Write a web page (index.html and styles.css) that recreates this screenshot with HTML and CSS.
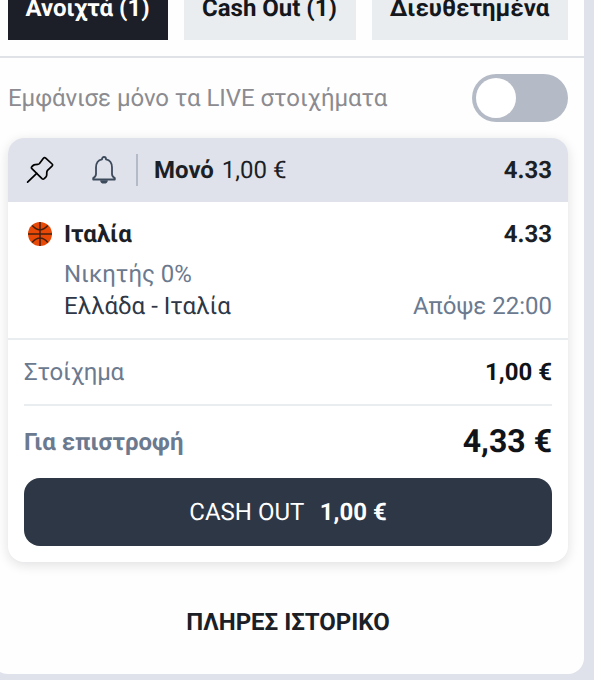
FILE: index.html
```html
<!DOCTYPE html>
<html lang="el">
<head>
  <meta charset="UTF-8">
  <meta name="viewport" content="width=device-width, initial-scale=1.0">
  <title>Στοιχήματα</title>
  <link rel="stylesheet" href="styles.css">
</head>
<body>
  <main class="panel">
    <nav class="tabs">
      <button class="tab tab-open active">Ανοιχτά (1)</button>
      <button class="tab tab-cashout">Cash Out (1)</button>
      <button class="tab tab-settled">Διευθετημένα</button>
    </nav>

    <div class="live-filter">
      <span class="live-label">Εμφάνισε μόνο τα LIVE στοιχήματα</span>
      <span class="toggle"></span>
    </div>

    <section class="bet-card">
      <header class="bet-header">
        <svg class="icon pin" viewBox="0 0 28 28" fill="none" stroke="#000" stroke-width="1.7" stroke-linecap="round" stroke-linejoin="round">
          <path d="M1.6 26.2L10.7 17.4"/>
          <path d="M17.4 2.2Q18.5 1 19.7 2.1L26.1 8Q27.2 9.1 26 10.1L21.5 14.4Q20.8 15.2 20.8 16.4L20.7 19.2Q20.6 20.3 19.8 21.1L18.2 22.7Q17.1 23.7 16 22.7L5.9 12.7Q4.9 11.6 6 10.5L7.1 9.5Q8 8.7 9.3 8.6L11.7 8.4Q12.8 8.3 13.5 7.5Z"/>
        </svg>
        <svg class="icon bell" viewBox="0 0 28 28" fill="none" stroke="#3c4a5c" stroke-width="1.8" stroke-linejoin="round">
          <path d="M12 3.4V3A2 2 0 0 1 16 3V3.4C20.3 4.3 22 7.6 22 11.5V18C22 20 23.2 21.2 24.8 22V23.5H3.2V22C4.8 21.2 6 20 6 18V11.5C6 7.6 7.7 4.3 12 3.4Z"/>
          <path d="M10.2 24.2H17.8A3.8 3.4 0 0 1 10.2 24.2Z" fill="#3c4a5c" stroke="none"/>
        </svg>
        <span class="separator"></span>
        <span class="bet-type"><b>Μονό</b> 1,00 €</span>
        <b class="odds">4.33</b>
      </header>

      <div class="selection">
        <div class="row pick">
          <svg class="ball" viewBox="0 0 24 24" fill="none" stroke="#45200f" stroke-width="1.5">
            <circle cx="12" cy="12" r="12" fill="#e84906" stroke="none"/>
            <path d="M12 0V24M0 12H24M4.2 3.6Q12 12.2 19.8 3.6M4.2 20.4Q12 11.8 19.8 20.4"/>
          </svg>
          <b>Ιταλία</b>
          <b class="odds">4.33</b>
        </div>
        <div class="row market">Νικητής 0%</div>
        <div class="row event">
          <span>Ελλάδα - Ιταλία</span>
          <span class="time">Απόψε 22:00</span>
        </div>
      </div>

      <div class="row stake">
        <span class="stake-label">Στοίχημα</span>
        <b class="amount">1,00 €</b>
      </div>
      <div class="row returns">
        <b>Για επιστροφή</b>
        <b class="amount total">4,33 €</b>
      </div>
      <button class="cashout-btn">CASH OUT <b>1,00 €</b></button>
    </section>

    <a class="history">ΠΛΗΡΕΣ ΙΣΤΟΡΙΚΟ</a>
  </main>
</body>
</html>
```

FILE: styles.css
```css
* {
  box-sizing: border-box;
}
body {
  margin: 0;
  height: 680px;
  overflow: hidden;
  background-color: #dfe2ea;
  font-family: Roboto, "Liberation Sans", sans-serif;
  font-size: 24px;
  line-height: 32px;
  color: #1c1f26;
  text-rendering: geometricPrecision;
}
button {
  border: none;
  font: inherit;
  text-rendering: inherit;
}
.panel {
  width: 592px;
  height: 674px;
  margin-left: -8px;
  background: #fefefe;
  border-radius: 0 0 16px 16px;
}
.tabs {
  display: flex;
  gap: 16px;
  height: 58px;
  padding: 0 16px 16px;
  border-bottom: 2px solid #dfe3e8;
}
.tab {
  height: 40px;
  padding: 0 1px 24px 0;
  background: #e9edf0;
  color: #14171c;
  font-weight: bold;
  line-height: 16px;
}
.tab-open {
  width: 160px;
}
.tab-cashout {
  width: 172px;
}
.tab-settled {
  width: 196px;
}
.tab.active {
  background: #1c1f28;
  color: #fff;
}
.live-filter {
  display: flex;
  align-items: center;
  justify-content: space-between;
  height: 80px;
  padding: 0 16px;
  color: #8b8b90;
}
.live-label {
  letter-spacing: -0.06px;
}
.toggle {
  width: 96px;
  height: 48px;
  padding: 4px;
  border-radius: 24px;
  background: #b5bbc6;
}
.toggle::before {
  content: "";
  display: block;
  width: 40px;
  height: 40px;
  border-radius: 50%;
  background: #fff;
}
.bet-card {
  height: 424px;
  margin: 0 16px;
  border-radius: 16px;
  background: #fff;
  box-shadow: 0 3px 12px rgba(20, 25, 40, 0.13);
}
.bet-header {
  display: flex;
  align-items: center;
  height: 64px;
  padding: 0 16px 0 18px;
  border-radius: 16px 16px 0 0;
  background: #dfe2ea;
}
.icon {
  width: 28px;
  height: 28px;
}
.bell {
  margin-left: 36px;
}
.separator {
  width: 2px;
  height: 32px;
  margin: 0 16px 0 18px;
  background: #b5bbc6;
}
.bet-type b {
  margin-right: 2px;
}
.odds,
.time,
.amount {
  margin-left: auto;
}
.selection {
  height: 138px;
  padding: 16px 16px 0 20px;
  border-bottom: 2px solid #e9edf0;
}
.row {
  display: flex;
  align-items: center;
}
.ball {
  width: 24px;
  height: 24px;
  margin-right: 12px;
}
.market {
  margin-top: 8px;
  padding-left: 36px;
  color: #6b7a8f;
}
.event {
  padding-left: 36px;
  color: #2e3745;
}
.time {
  color: #6b7a8f;
}
.stake {
  height: 66px;
  margin: 0 16px;
  border-bottom: 2px solid #e9edf0;
  color: #6b7a8f;
}
.stake-label {
  letter-spacing: -0.2px;
}
.returns {
  height: 72px;
  margin: 0 16px;
  color: #6b7a8f;
}
.amount {
  color: #101318;
}
.total {
  padding-bottom: 2px;
  font-size: 32px;
}
.cashout-btn {
  display: block;
  width: 528px;
  height: 68px;
  margin: 0 16px;
  border-radius: 16px;
  background: #2e3746;
  color: #fff;
}
.cashout-btn b {
  margin-left: 10px;
}
.history {
  display: block;
  margin-top: 44px;
  text-align: center;
  font-weight: bold;
}
```
